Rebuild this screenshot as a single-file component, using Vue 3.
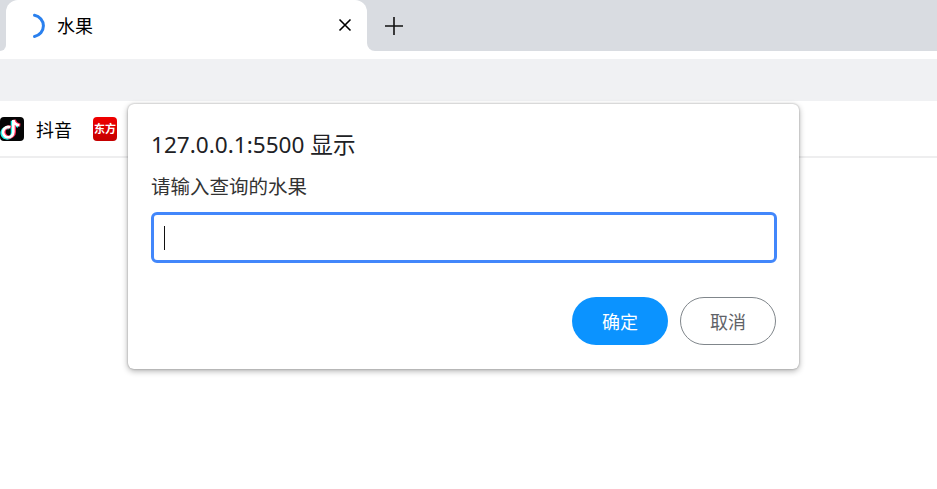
<script setup>
const title = '127.0.0.1:5500 显示'
const message = '请输入查询的水果'
</script>

<template>
  <div class="page">
    <div class="strip">
      <div class="edge-left"></div>
      <div class="tab">
        <svg class="spinner" width="16" height="28" viewBox="0 0 16 28">
          <path d="M2.5 3.3 A10.7 10.7 0 0 1 2.5 24.4" fill="none" stroke="#2a80ee" stroke-width="3" stroke-linecap="round" />
        </svg>
        <span class="tab-title">水果</span>
        <svg class="close" width="14" height="14" viewBox="0 0 14 14">
          <path d="M1.5 1.5 L12.5 12.5 M12.5 1.5 L1.5 12.5" stroke="#000" stroke-width="1.6" fill="none" />
        </svg>
      </div>
      <div class="edge-right">
        <svg class="plus" width="18" height="18" viewBox="0 0 18 18">
          <path d="M9 0 V18 M0 9 H18" stroke="#111" stroke-width="1.6" fill="none" />
        </svg>
      </div>
    </div>
    <div class="toolbar"></div>
    <div class="bookmarks">
      <div class="bookmark">
        <svg class="tiktok" width="24" height="24" viewBox="0 0 24 24">
          <rect width="24" height="24" rx="4" fill="#050505" />
          <g transform="translate(-2.6 -2.4) scale(1.2)">
            <path d="M10.6 10.6 A4.3 4.3 0 1 0 13.3 14.6 V4.5 C13.8 7.2 15.6 8.6 18.2 8.9" fill="none" stroke="#25f4ee" stroke-width="2.6" transform="translate(-.9 .7)" />
            <path d="M10.6 10.6 A4.3 4.3 0 1 0 13.3 14.6 V4.5 C13.8 7.2 15.6 8.6 18.2 8.9" fill="none" stroke="#fe2c55" stroke-width="2.6" transform="translate(.9 -.1)" />
            <path d="M10.6 10.6 A4.3 4.3 0 1 0 13.3 14.6 V4.5 C13.8 7.2 15.6 8.6 18.2 8.9" fill="none" stroke="#fff" stroke-width="2.2" />
          </g>
        </svg>
        <span class="bookmark-label">抖音</span>
      </div>
      <div class="east"><span>东方</span></div>
    </div>

    <div class="dialog">
      <h1 class="dialog-title">{{ title }}</h1>
      <p class="dialog-message">{{ message }}</p>
      <div class="field"><i class="caret"></i></div>
      <div class="actions">
        <button class="btn primary">确定</button>
        <button class="btn ghost">取消</button>
      </div>
    </div>
  </div>
</template>

<style>
html, body { margin: 0; background: #fff; overflow: hidden; }
</style>

<style scoped>
.page {
  position: relative;
  width: 937px;
  height: 489px;
  background: #fff;
  overflow: hidden;
  font-family: "Noto Sans", "Noto Sans CJK SC", sans-serif;
}
.strip {
  display: flex;
  height: 59px;
  background: linear-gradient(#d9dce1 0 20px, #fff 20px);
}
.edge-left {
  width: 6px;
  height: 51px;
  background: #d9dce1;
  border-bottom-right-radius: 6px;
}
.edge-right {
  flex: 1;
  height: 51px;
  display: flex;
  align-items: center;
  padding-left: 18px;
  background: #d9dce1;
  border-bottom-left-radius: 8px;
}
.tab {
  width: 361px;
  height: 59px;
  box-sizing: border-box;
  display: flex;
  align-items: flex-start;
  padding: 12px 15px 0 26px;
  background: #fff;
  border-radius: 12px 12px 0 0;
}
.spinner { display: block; }
.tab-title {
  margin-left: 9px;
  margin-top: 1px;
  font-size: 18px;
  line-height: 26px;
  color: #000;
}
.close { margin: 6px 0 0 auto; }
.toolbar { height: 42px; background: #f0f1f3; }
.bookmarks {
  height: 57px;
  box-sizing: border-box;
  display: flex;
  align-items: flex-start;
  padding-top: 16px;
  background: #fff;
  border-bottom: 2px solid #eeeeef;
}
.bookmark { display: flex; align-items: center; height: 24px; }
.tiktok { display: block; }
.bookmark-label {
  margin-left: 12px;
  margin-top: 2px;
  font-size: 18px;
  line-height: 26px;
  color: #000;
}
.east {
  width: 24px;
  height: 24px;
  margin-left: 21px;
  border-radius: 4px;
  background: linear-gradient(#f00000, #c40000);
  display: flex;
  align-items: center;
  justify-content: center;
}
.east span {
  font-size: 11px;
  line-height: 12px;
  font-weight: 700;
  color: #fff;
  white-space: nowrap;
}
.dialog {
  position: absolute;
  left: 128px;
  top: 104px;
  width: 671px;
  height: 265px;
  box-sizing: border-box;
  padding: 25px 22px 0 23px;
  background: #fff;
  border-radius: 6px;
  box-shadow: 0 0 2px rgba(0, 0, 0, .32), 0 2px 6px rgba(0, 0, 0, .32);
}
.dialog-title {
  margin: 0;
  font-size: 22.6px;
  line-height: 32px;
  font-weight: 400;
  color: #202124;
}
.dialog-message {
  margin: 12px 0 0;
  font-size: 19.5px;
  line-height: 28px;
  color: #333;
}
.field {
  margin-top: 11px;
  height: 51px;
  width: 626px;
  box-sizing: border-box;
  border: 3px solid #4287fb;
  border-radius: 6px;
  display: flex;
  align-items: center;
  padding-left: 10px;
}
.caret { display: block; width: 1px; height: 24px; background: #111; }
.actions {
  display: flex;
  justify-content: flex-end;
  gap: 12px;
  width: 625px;
  margin-top: 34px;
}
.btn {
  width: 96px;
  height: 48px;
  box-sizing: border-box;
  border-radius: 24px;
  font-family: inherit;
  font-size: 18px;
  padding: 0;
}
.primary { background: #0b93ff; border: 0; color: #fff; }
.ghost { background: #fff; border: 1px solid #80868b; color: #5f6368; }
</style>
